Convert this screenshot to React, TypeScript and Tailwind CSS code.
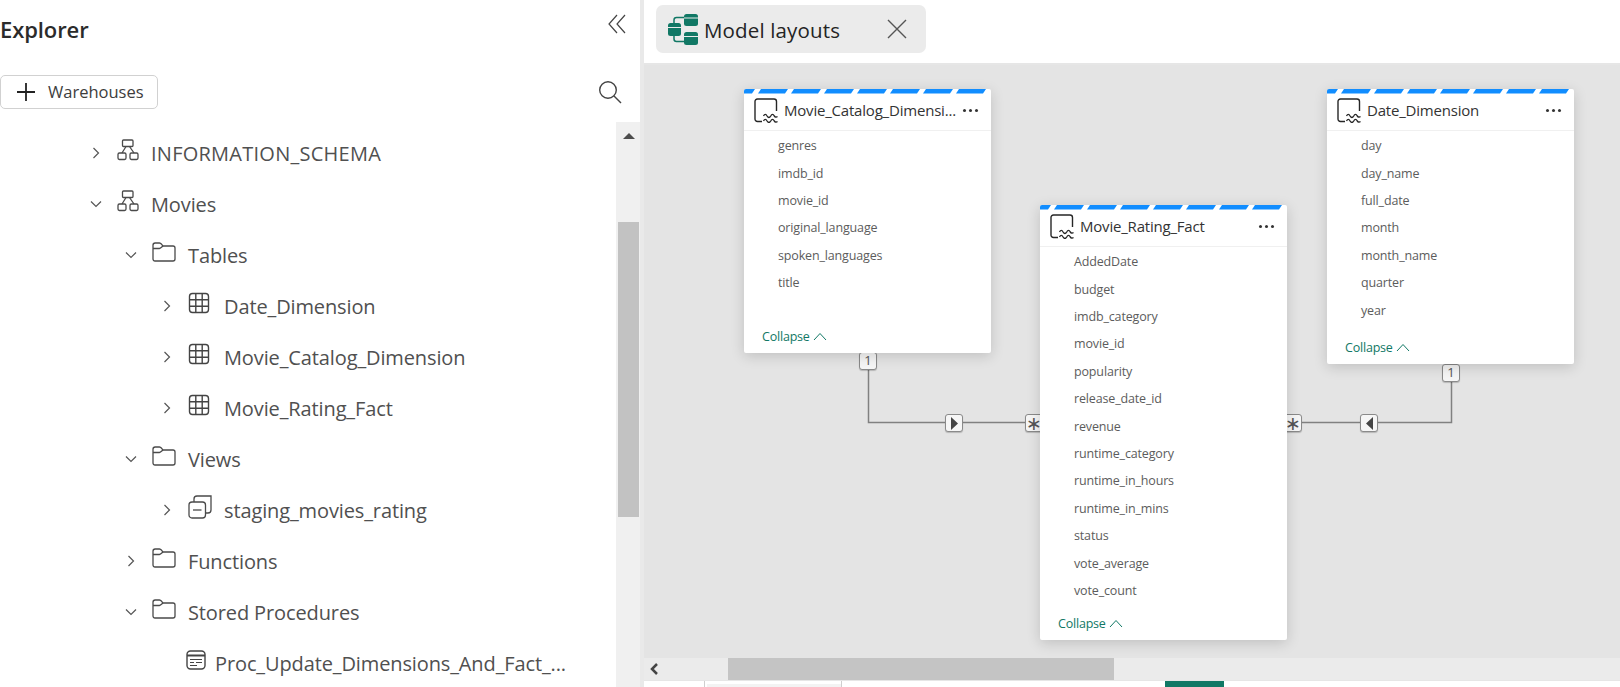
import React from 'react';

const font = "font-['Open_Sans','Noto_Sans',sans-serif]";

const Chevron = ({ open }: { open?: boolean }) => (
  <svg width="14" height="14" viewBox="0 0 14 14" fill="none" stroke="#555" strokeWidth="1.2">
    {open ? <path d="M2 4.5 7 9.5 12 4.5" /> : <path d="M4.5 2 9.5 7 4.5 12" />}
  </svg>
);

const SchemaIcon = () => (
  <svg width="22" height="22" viewBox="0 0 22 22" fill="none" stroke="#4a4a4a" strokeWidth="1.3">
    <rect x="5.5" y="1" width="10.5" height="6.5" rx="1" />
    <rect x="1" y="14" width="8" height="6.5" rx="1.4" />
    <rect x="13" y="14" width="8" height="6.5" rx="1.4" />
    <path d="M9 7.5 5 14M12.5 7.5 17 14" />
  </svg>
);

const FolderIcon = () => (
  <svg width="24" height="20" viewBox="0 0 24 20" fill="none" stroke="#4a4a4a" strokeWidth="1.3">
    <path d="M1 3.2C1 2 2 1 3.2 1H7.5C8.5 1 9 1.6 9.6 2.3L11 4H21C22.2 4 23 4.9 23 6V17C23 18.2 22.2 19 21 19H3C1.9 19 1 18.2 1 17Z" />
    <path d="M1 6.5H7.5C8.5 6.5 9.4 5.5 11 4" />
  </svg>
);

const TableIcon = () => (
  <svg width="22" height="22" viewBox="0 0 22 22" fill="none" stroke="#444" strokeWidth="1.4">
    <rect x="1.5" y="1.5" width="19" height="19" rx="3" />
    <path d="M7.8 1.5V20.5M14.2 1.5V20.5M1.5 7.8H20.5M1.5 14.2H20.5" />
  </svg>
);

const ViewIcon = () => (
  <svg width="24" height="24" viewBox="0 0 24 24" fill="none" stroke="#4a4a4a" strokeWidth="1.3">
    <rect x="1" y="7" width="16.5" height="16" rx="3" />
    <path d="M6 7V4C6 2.3 7 1 9 1H23V15C23 17 22 18 20 18H17.5" />
    <path d="M5 15H13.5" />
  </svg>
);

const ProcIcon = () => (
  <svg width="20" height="20" viewBox="0 0 20 20" fill="none" stroke="#444" strokeWidth="1.4">
    <rect x="1" y="1" width="18" height="18" rx="3.5" />
    <path d="M1 5.5H19" strokeWidth="2" />
    <path d="M4 9.5H16M4 12.5H8M10 12.5H16M4 15.5H11" strokeWidth="1.2" />
  </svg>
);

const LakeIcon = () => (
  <svg width="24" height="25" viewBox="0 0 24 25" fill="none" stroke="#262626" strokeWidth="1.4">
    <path d="M8 23.5H3.5C2 23.5 1 22.5 1 21V3.5C1 2 2 1 3.5 1H20C21.5 1 22.5 2 22.500 3.5V13" />
    <path d="M9.500 18c1.200-2.200 2.400-2.200 3.600 0 1.200 2 2.400 2 3.600 0 1.200-2.200 2.400-2.200 3.600 0 .8 1.200 2 1.500 3.200.5" />
    <path d="M9.500 23c1.200-2.200 2.400-2.200 3.600 0 1.200 2 2.400 2 3.600 0 1.200-2.200 2.400-2.200 3.600 0 .8 1.200 2 1.500 3.200.5" />
  </svg>
);

const Stripes = () => (
  <svg width="247" height="5" viewBox="0 0 247 5" className="block">
    <polygon points="0,0 11,0 8,4.500 0,4.500" fill="#118dff" />
    {[0, 1, 2, 3, 4, 5, 6].map((i) => (
      <polygon
        key={i}
        points={`${17 + i * 33},0 ${44 + i * 33},0 ${41 + i * 33},4.500 ${14 + i * 33},4.500`}
        fill="#118dff"
      />
    ))}
  </svg>
);

const rows = [
  { indent: 'pl-[89px]', label: 'INFORMATION_SCHEMA', icon: <SchemaIcon />, iw: 'w-[34px]', track: 'tracking-[0.25px]' },
  { indent: 'pl-[89px]', label: 'Movies', icon: <SchemaIcon />, open: true, iw: 'w-[34px]' },
  { indent: 'pl-[124px]', label: 'Tables', icon: <FolderIcon />, open: true, iw: 'w-[36px]' },
  { indent: 'pl-[160px]', label: 'Date_Dimension', icon: <TableIcon />, iw: 'w-[36px]' },
  { indent: 'pl-[160px]', label: 'Movie_Catalog_Dimension', icon: <TableIcon />, iw: 'w-[36px]' },
  { indent: 'pl-[160px]', label: 'Movie_Rating_Fact', icon: <TableIcon />, iw: 'w-[36px]' },
  { indent: 'pl-[124px]', label: 'Views', icon: <FolderIcon />, open: true, iw: 'w-[36px]' },
  { indent: 'pl-[160px]', label: 'staging_movies_rating', icon: <ViewIcon />, iw: 'w-[36px]' },
  { indent: 'pl-[124px]', label: 'Functions', icon: <FolderIcon />, iw: 'w-[36px]' },
  { indent: 'pl-[124px]', label: 'Stored Procedures', icon: <FolderIcon />, open: true, iw: 'w-[36px]' },
  { indent: 'pl-[186px]', label: 'Proc_Update_Dimensions_And_Fact_...', icon: <ProcIcon />, iw: 'w-[29px]', leaf: true },
];

const TreeRow = ({ row }: { row: (typeof rows)[number] }) => (
  <div className={`flex h-[51px] items-center ${row.indent}`}>
    {!row.leaf && (
      <span className="mb-px flex w-[28px] shrink-0">
        <Chevron open={row.open} />
      </span>
    )}
    <span className={`mb-2 shrink-0 ${row.iw}`}>{row.icon}</span>
    <span className={`whitespace-nowrap text-[20px] text-[#505050] ${row.track ?? 'tracking-[-0.12px]'}`}>{row.label}</span>
  </div>
);

const TableCard = ({
  title,
  columns,
  className,
}: {
  title: string;
  columns: string[];
  className: string;
}) => (
  <div className={`absolute flex w-[247px] flex-col overflow-hidden rounded-[2px] bg-white shadow-[0_3px_14px_rgba(0,0,0,0.16)] ${className}`}>
    <Stripes />
    <div className="flex h-[37px] items-center border-b border-[#f0f0f0] pb-[4px] pl-[10px] pr-[13px]">
      <span className="mr-[6px] shrink-0">
        <LakeIcon />
      </span>
      <span className="flex-1 whitespace-nowrap text-[15px] tracking-[-0.2px] text-[#333]">{title}</span>
      <span className="ml-1 flex gap-[3px]">
        <i className="h-[3px] w-[3px] rounded-full bg-[#333]" />
        <i className="h-[3px] w-[3px] rounded-full bg-[#333]" />
        <i className="h-[3px] w-[3px] rounded-full bg-[#333]" />
      </span>
    </div>
    <div className="flex flex-1 flex-col pt-[2px] pl-[34px]">
      {columns.map((c) => (
        <div key={c} className="flex h-[27.4px] items-center text-[12.5px] tracking-[-0.15px] text-[#5c5c5c]">
          {c}
        </div>
      ))}
    </div>
    <div className="flex h-[25px] items-start gap-[3px] pl-[18px] text-[12.5px] tracking-[-0.2px] text-[#117865]">
      Collapse
      <svg width="14" height="9" viewBox="0 0 14 9" fill="none" stroke="#117865" strokeWidth="1" className="mt-[4px]">
        <path d="M1 8 7 1.500 13 8" />
      </svg>
    </div>
  </div>
);

const Badge = ({ className, children }: { className: string; children: React.ReactNode }) => (
  <div className={`absolute flex h-[18px] w-[18px] items-center justify-center rounded-[3px] border border-[#8a8a8a] bg-[#f6f6f6] text-[13px] text-[#555] shadow-[0_1px_1px_rgba(0,0,0,0.2)] ${className}`}>
    {children}
  </div>
);

const Star = () => <span className="font-['DejaVu_Sans',sans-serif] text-[19px] leading-none">∗</span>;

const catalogCols = ['genres', 'imdb_id', 'movie_id', 'original_language', 'spoken_languages', 'title'];
const factCols = [
  'AddedDate', 'budget', 'imdb_category', 'movie_id', 'popularity', 'release_date_id', 'revenue',
  'runtime_category', 'runtime_in_hours', 'runtime_in_mins', 'status', 'vote_average', 'vote_count',
];
const dateCols = ['day', 'day_name', 'full_date', 'month', 'month_name', 'quarter', 'year'];

export default function App() {
  return (
    <div className={`flex h-[687px] w-[1620px] overflow-hidden bg-white ${font}`}>
      {/* Explorer */}
      <div className="flex w-[640px] shrink-0 flex-col">
        <div className="flex h-[60px] shrink-0 items-start justify-between pr-[14px]">
          <span className="mt-[13px] text-[22px] font-semibold tracking-[-0.1px] text-[#2b2b2b]">Explorer</span>
          <svg width="18" height="20" viewBox="0 0 18 20" fill="none" stroke="#444" strokeWidth="1.2" className="mt-[14px]">
            <path d="M9 1 1 10 9 19M17 1 9 10 17 19" />
          </svg>
        </div>
        <div className="flex h-[62px] shrink-0 items-start justify-between pt-[15px] pr-[18px]">
          <button className="flex h-[34px] w-[158px] items-center rounded-[5px] border border-[#d1d1d1] pl-[16px] text-[16.5px] text-[#3d3d3d]">
            <svg width="18" height="18" viewBox="0 0 18 18" stroke="#222" strokeWidth="1.8" className="mr-[13px]">
              <path d="M9 0V18M0 9H18" />
            </svg>
            Warehouses
          </button>
          <svg width="24" height="24" viewBox="0 0 24 24" fill="none" stroke="#444" strokeWidth="1.4" className="mt-[5px]">
            <circle cx="10" cy="10" r="8.300" />
            <path d="M16 16 23 23" />
          </svg>
        </div>
        <div className="flex min-h-0 flex-1">
          <div className="min-w-0 flex-1 overflow-hidden pt-[6px]">
            {rows.map((r) => (
              <TreeRow key={r.label} row={r} />
            ))}
          </div>
          <div className="flex w-[24px] shrink-0 flex-col items-center bg-[#f0f0f0] pl-[1px]">
            <div className="mt-[11px] h-0 w-0 border-x-[6px] border-b-[6px] border-x-transparent border-b-[#4d4d4d]" />
            <div className="mt-[83px] h-[295px] w-[21px] bg-[#c2c2c2]" />
          </div>
        </div>
      </div>

      <div className="w-[4px] shrink-0 bg-[#e9e9e9]" />

      {/* Model layouts */}
      <div className="flex min-w-0 flex-1 flex-col">
        <div className="h-[65px] shrink-0 border-b-2 border-[#e6e6e6] pl-[12px] pt-[5px]">
          <div className="flex h-[48px] w-[270px] items-center rounded-[7px] bg-[#ebebeb] pl-[12px]">
            <svg width="30" height="31" viewBox="0 0 30 31" fill="none" className="mr-[6px]">
              <path d="M6 10V6C6 4.500 7 3.500 8.500 3.500H17M6 21V25C6 26.500 7 27.500 8.500 27.500H17" stroke="#117865" strokeWidth="1.5" />
              <rect x="0" y="9" width="13" height="13" rx="2.500" fill="#117865" />
              <rect x="16" y="0" width="14" height="12" rx="2.500" fill="#117865" />
              <rect x="16" y="18" width="14" height="13" rx="2.500" fill="#117865" />
              <path d="M0 13.500H13M16 4H30M16 22.500H30" stroke="#ebebeb" strokeWidth="1" />
            </svg>
            <span className="mt-[2px] text-[20.5px] font-medium tracking-[0.15px] text-[#242424]">Model layouts</span>
            <svg width="20" height="20" viewBox="0 0 20 20" stroke="#555" strokeWidth="1.4" className="ml-[47px]">
              <path d="M1 1 19 19M19 1 1 19" />
            </svg>
          </div>
        </div>

        <div className="relative min-h-0 flex-1 overflow-hidden bg-[#e4e4e4]">
          <svg className="absolute inset-0" width="976" height="593" fill="none" stroke="#808080" strokeWidth="1.5">
            <path d="M224.500 299V357.500H400" />
            <path d="M650 357.500H807.500V309" />
          </svg>
          <Badge className="left-[215px] top-[287px]">1</Badge>
          <Badge className="left-[301px] top-[349px]">
            <svg width="7" height="13" viewBox="0 0 7 13" fill="#444"><path d="M0 0 7 6.500 0 13Z" /></svg>
          </Badge>
          <Badge className="left-[381px] top-[349px]"><Star /></Badge>
          <Badge className="left-[640px] top-[349px]"><Star /></Badge>
          <Badge className="left-[716px] top-[349px]">
            <svg width="7" height="13" viewBox="0 0 7 13" fill="#444"><path d="M7 0 0 6.500 7 13Z" /></svg>
          </Badge>
          <Badge className="left-[798px] top-[299px]">1</Badge>

          <TableCard title="Movie_Catalog_Dimensi..." columns={catalogCols} className="left-[100px] top-[24px] h-[264px]" />
          <TableCard title="Movie_Rating_Fact" columns={factCols} className="left-[396px] top-[140px] h-[435px]" />
          <TableCard title="Date_Dimension" columns={dateCols} className="left-[683px] top-[24px] h-[275px]" />
        </div>

        {/* horizontal scrollbar */}
        <div className="flex h-[22px] shrink-0 items-center bg-[#ebebeb]">
          <svg width="10" height="12" viewBox="0 0 10 12" fill="none" stroke="#444" strokeWidth="2.500" className="ml-[5px]">
            <path d="M8 1 3 6 8 11" />
          </svg>
          <div className="ml-[69px] h-full w-[386px] bg-[#c4c4c4]" />
        </div>
        <div className="flex h-[7px] shrink-0 border-t border-[#e6e6e6] bg-white">
          <div className="ml-[60px] w-[138px] border-x border-[#cfcfcf] bg-white pl-[2px] pt-[3px]">
            <div className="h-full bg-[#f3f3f3]" />
          </div>
          <div className="ml-[323px] w-[59px] bg-[#117865]" />
        </div>
      </div>
    </div>
  );
}
